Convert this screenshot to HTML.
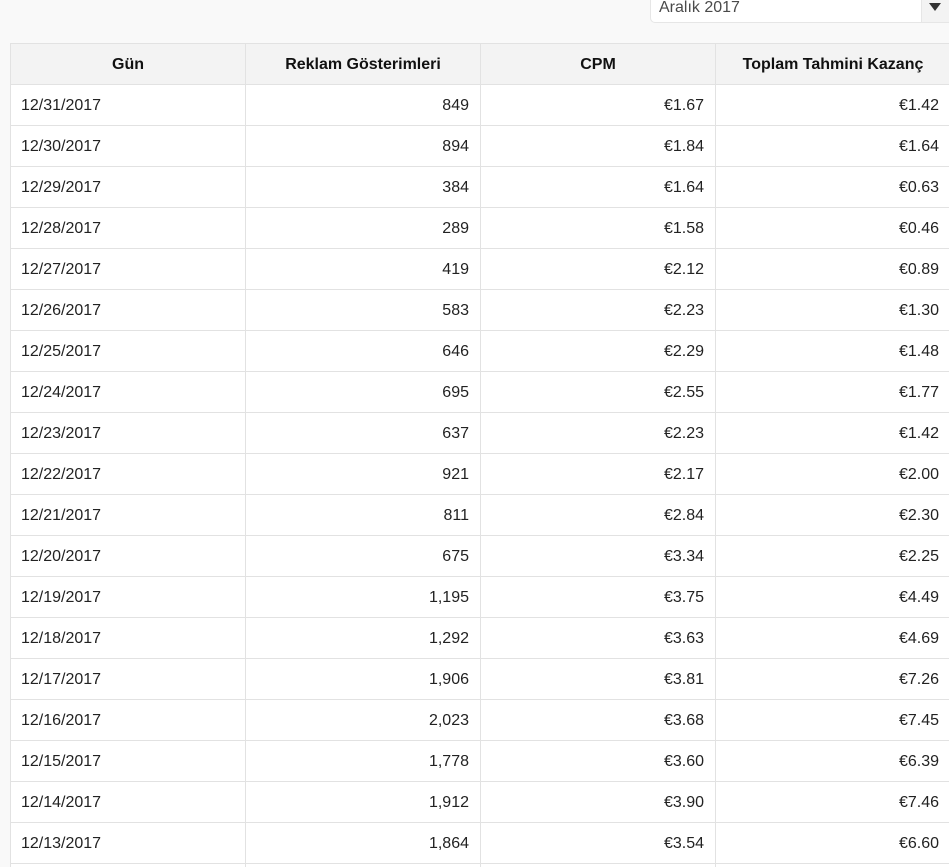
<!DOCTYPE html>
<html lang="tr">
<head>
<meta charset="utf-8">
<title>Rapor</title>
<style>
html,body{margin:0;padding:0;width:949px;height:867px;overflow:hidden;background:#f9f9f9;font-family:"Liberation Sans",sans-serif;}
#wrap{position:absolute;left:0;top:0;width:949px;height:867px;overflow:hidden;}
.sel{position:absolute;left:650px;top:-11px;width:299px;height:34px;box-sizing:border-box;background:#fff;border:1px solid #e6e6e6;border-right:0;border-radius:0 0 0 5px;}
.sel span{position:absolute;left:8px;top:9px;font-size:16px;line-height:18px;color:#4a4a4a;}
.sel i{position:absolute;left:270px;top:0;width:29px;height:32px;background:#f3f3f3;border-left:1px solid #e6e6e6;}
.sel i:after{content:"";position:absolute;left:7px;top:13px;border-left:6px solid transparent;border-right:6px solid transparent;border-top:8px solid #333;}
table{position:absolute;left:10px;top:43px;width:941px;border-collapse:collapse;table-layout:fixed;background:#fff;font-size:16px;color:#222;}
th,td{border:1px solid #e2e2e2;height:39px;padding:1px 11px 0 10px;box-sizing:content-box;line-height:18px;}
th{background:#f3f3f3;font-size:16px;font-weight:bold;color:#111;text-align:center;padding:1px 0 0;}
th:last-child{padding-right:1px;}
td{text-align:right;}
td:first-child{text-align:left;}
td:last-child{padding-right:12px;}
</style>
</head>
<body>
<div id="wrap">
<div class="sel"><span>Aralık 2017</span><i></i></div>
<table>
<colgroup><col style="width:235px"><col style="width:235px"><col style="width:235px"><col style="width:236px"></colgroup>
<tr><th>Gün</th><th>Reklam Gösterimleri</th><th>CPM</th><th>Toplam Tahmini Kazanç</th></tr>
<tr><td>12/31/2017</td><td>849</td><td>€1.67</td><td>€1.42</td></tr>
<tr><td>12/30/2017</td><td>894</td><td>€1.84</td><td>€1.64</td></tr>
<tr><td>12/29/2017</td><td>384</td><td>€1.64</td><td>€0.63</td></tr>
<tr><td>12/28/2017</td><td>289</td><td>€1.58</td><td>€0.46</td></tr>
<tr><td>12/27/2017</td><td>419</td><td>€2.12</td><td>€0.89</td></tr>
<tr><td>12/26/2017</td><td>583</td><td>€2.23</td><td>€1.30</td></tr>
<tr><td>12/25/2017</td><td>646</td><td>€2.29</td><td>€1.48</td></tr>
<tr><td>12/24/2017</td><td>695</td><td>€2.55</td><td>€1.77</td></tr>
<tr><td>12/23/2017</td><td>637</td><td>€2.23</td><td>€1.42</td></tr>
<tr><td>12/22/2017</td><td>921</td><td>€2.17</td><td>€2.00</td></tr>
<tr><td>12/21/2017</td><td>811</td><td>€2.84</td><td>€2.30</td></tr>
<tr><td>12/20/2017</td><td>675</td><td>€3.34</td><td>€2.25</td></tr>
<tr><td>12/19/2017</td><td>1,195</td><td>€3.75</td><td>€4.49</td></tr>
<tr><td>12/18/2017</td><td>1,292</td><td>€3.63</td><td>€4.69</td></tr>
<tr><td>12/17/2017</td><td>1,906</td><td>€3.81</td><td>€7.26</td></tr>
<tr><td>12/16/2017</td><td>2,023</td><td>€3.68</td><td>€7.45</td></tr>
<tr><td>12/15/2017</td><td>1,778</td><td>€3.60</td><td>€6.39</td></tr>
<tr><td>12/14/2017</td><td>1,912</td><td>€3.90</td><td>€7.46</td></tr>
<tr><td>12/13/2017</td><td>1,864</td><td>€3.54</td><td>€6.60</td></tr>
<tr><td></td><td></td><td></td><td></td></tr>
</table>
</div>
</body>
</html>
